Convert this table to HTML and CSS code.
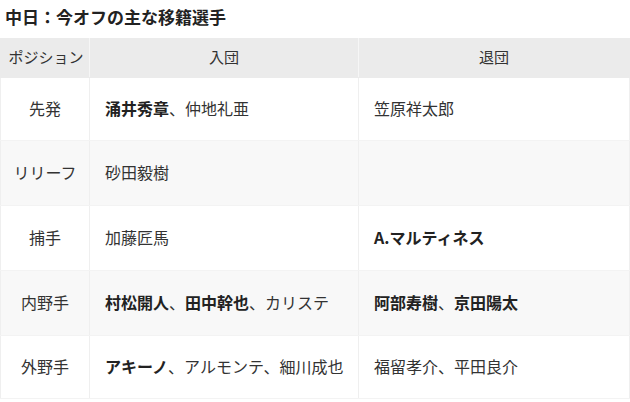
FILE: index.html
```html
<!DOCTYPE html>
<html lang="ja">
<head>
<meta charset="utf-8">
<link rel="stylesheet" href="styles.css">
</head>
<body>
<h2 class="title">中日：今オフの主な移籍選手</h2>
<table class="moves">
  <colgroup>
    <col class="c-pos">
    <col class="c-in">
    <col class="c-out">
  </colgroup>
  <thead>
    <tr><th>ポジション</th><th>入団</th><th>退団</th></tr>
  </thead>
  <tbody>
    <tr><td class="pos">先発</td><td><b>涌井秀章</b>、仲地礼亜</td><td>笠原祥太郎</td></tr>
    <tr><td class="pos">リリーフ</td><td>砂田毅樹</td><td></td></tr>
    <tr><td class="pos">捕手</td><td>加藤匠馬</td><td><b>A.マルティネス</b></td></tr>
    <tr><td class="pos">内野手</td><td><b>村松開人</b>、<b>田中幹也</b>、カリステ</td><td><b>阿部寿樹</b>、<b>京田陽太</b></td></tr>
    <tr class="last"><td class="pos">外野手</td><td><b>アキーノ</b>、アルモンテ、細川成也</td><td>福留孝介、平田良介</td></tr>
  </tbody>
</table>
</body>
</html>
```

FILE: styles.css
```css
html, body {
  margin: 0;
  padding: 0;
  background: #fff;
}
body {
  font-family: "Noto Sans CJK JP", "Noto Sans", sans-serif;
  color: #333;
}
.title {
  margin: 0;
  padding: 5px 0 0 5px;
  height: 36px;
  box-sizing: border-box;
  font-size: 17px;
  line-height: 24px;
  font-weight: bold;
  color: #222;
}
.moves {
  border-collapse: collapse;
  table-layout: fixed;
  width: 629px;
  margin-top: 2px;
}
.c-pos { width: 89px; }
.c-in { width: 269px; }
.c-out { width: 271px; }
.moves th {
  background: #ebebeb;
  font-weight: normal;
  font-size: 15px;
  height: 35px;
  padding: 0 0 3px;
  border: 1px solid #ebebeb;
  border-right: 1px solid #f6f6f6;
  text-align: center;
  color: #333;
}
.moves th:first-child { padding-left: 2px; }
.moves th:last-child { border-right: 1px solid #ebebeb; }
.moves td {
  height: 62px;
  padding: 0 15px 2px;
  font-size: 16px;
  border: 1px solid #efefef;
  border-top: none;
  border-bottom: 1px solid #f3f3f3;
  color: #333;
  white-space: nowrap;
}
.moves tbody tr:first-child td,
.moves tbody tr.last td {
  height: 60px;
}
.moves td.pos {
  text-align: center;
  padding: 0 0 2px;
}
.moves tbody tr:nth-child(even) td {
  background: #f8f8f8;
}
.moves b {
  color: #222;
  font-weight: bold;
}
```
